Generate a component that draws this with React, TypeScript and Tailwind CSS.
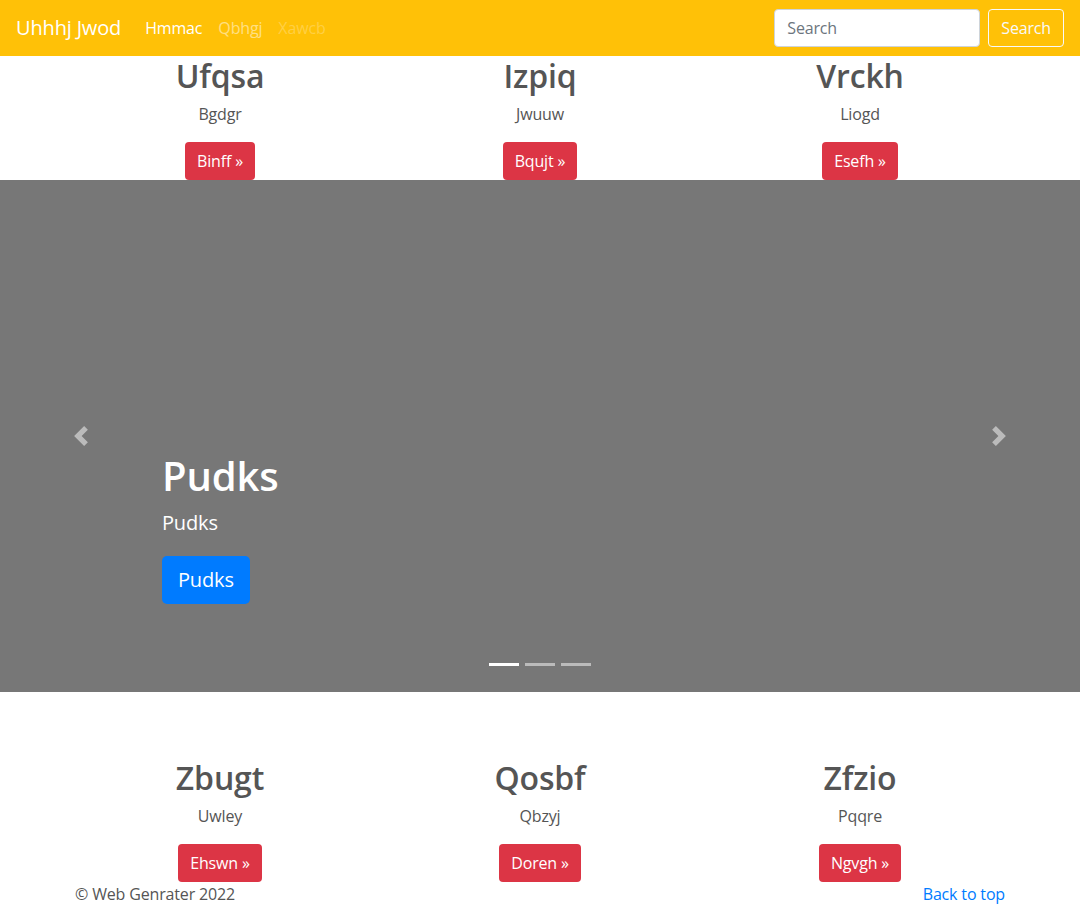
import React from "react";

const font = { fontFamily: '"Open Sans", "Noto Sans", Arial, sans-serif', letterSpacing: "-0.01em" };

function Chevron({ dir }: { dir: "left" | "right" }) {
  return (
    <svg width="20" height="20" viewBox="0 0 8 8" className="opacity-50">
      {dir === "left" ? (
        <path fill="#fff" d="M5.25 0l-4 4 4 4 1.5-1.5L4.25 4l2.5-2.5L5.25 0z" />
      ) : (
        <path fill="#fff" d="M2.75 0l-1.5 1.5L3.75 4l-2.5 2.5L2.75 8l4-4-4-4z" />
      )}
    </svg>
  );
}

function Feature({ title, text, btn }: { title: string; text: string; btn: string }) {
  return (
    <div className="flex flex-col items-center text-center">
      <h2 className="text-[32px] leading-[38px] font-semibold text-[#555] pt-[1px] mb-[7px]">{title}</h2>
      <p className="text-[16px] leading-6 text-[#555] mb-4">{text}</p>
      <button className="bg-[#dc3545] text-white text-[16px] leading-6 px-3 py-[7px] rounded-[4px]">
        {btn} »
      </button>
    </div>
  );
}

export default function App() {
  return (
    <div className="min-h-[905px] bg-white" style={font}>
      <nav className="h-14 bg-[#ffc107] flex items-center px-4">
        <span className="text-white text-[20px] leading-[30px] mr-6">Uhhhj Jwod</span>
        <div className="flex gap-4 text-[16px]">
          <span className="text-white">Hmmac</span>
          <span className="text-white/50">Qbhgj</span>
          <span className="text-white/25">Xawcb</span>
        </div>
        <div className="ml-auto flex items-center gap-2">
          <div className="w-[206px] h-[38px] bg-white border border-[#ced4da] rounded-[4px] flex items-center px-3 text-[16px] text-[#6c757d]">
            Search
          </div>
          <button className="h-[38px] px-3 border border-[#f8f9fa] rounded-[4px] text-[#f8f9fa] text-[16px]">
            Search
          </button>
        </div>
      </nav>

      <div className="w-[960px] mx-auto grid grid-cols-3">
        <Feature title="Ufqsa" text="Bgdgr" btn="Binff" />
        <Feature title="Izpiq" text="Jwuuw" btn="Bqujt" />
        <Feature title="Vrckh" text="Liogd" btn="Esefh" />
      </div>

      <div className="relative h-[512px] bg-[#777]">
        <div className="absolute left-0 top-0 h-full w-[15%] flex items-center justify-center">
          <Chevron dir="left" />
        </div>
        <div className="absolute right-0 top-0 h-full w-[15%] flex items-center justify-center">
          <Chevron dir="right" />
        </div>
        <div className="absolute left-[15%] right-[15%] bottom-[88px] text-white">
          <h1 className="text-[40px] leading-[48px] font-semibold mb-2">Pudks</h1>
          <p className="text-[20px] leading-[30px] mb-[18px]">Pudks</p>
          <button className="bg-[#007bff] text-white text-[20px] leading-[30px] px-4 py-[9px] rounded-[5px]">
            Pudks
          </button>
        </div>
        <div className="absolute bottom-[26px] left-0 right-0 flex justify-center gap-[6px]">
          <span className="w-[30px] h-[3px] bg-white" />
          <span className="w-[30px] h-[3px] bg-white/50" />
          <span className="w-[30px] h-[3px] bg-white/50" />
        </div>
      </div>

      <div className="w-[960px] mx-auto grid grid-cols-3 mt-[66px]">
        <Feature title="Zbugt" text="Uwley" btn="Ehswn" />
        <Feature title="Qosbf" text="Qbzyj" btn="Doren" />
        <Feature title="Zfzio" text="Pqqre" btn="Ngvgh" />
      </div>

      <footer className="w-[960px] mx-auto px-[15px] flex justify-between text-[16px] leading-6">
        <span className="text-[#555]">© Web Genrater 2022</span>
        <span className="text-[#007bff]">Back to top</span>
      </footer>
    </div>
  );
}
